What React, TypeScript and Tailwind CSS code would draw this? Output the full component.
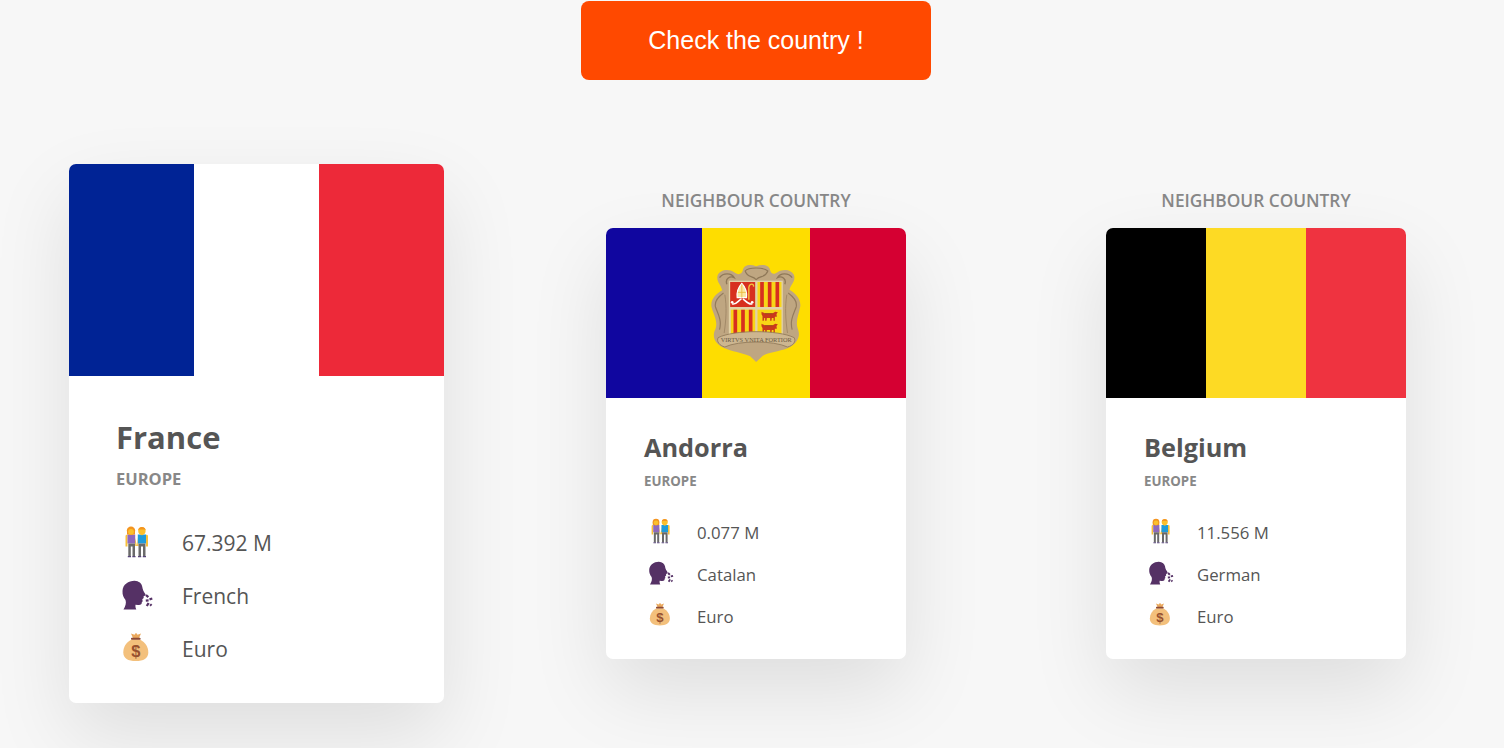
const Couple = ({ className }: { className: string }) => (
  <svg viewBox="0 0 40 40" className={className}>
    {/* arms */}
    <path d="M9.500 14a1.500 1.500 0 0 1 2-1.200v11.700H9.500zM30 12.800a1.500 1.500 0 0 1 2 1.200v10.500h-2z" fill="#f8c03a" />
    <path d="M18.800 15l2.200 9h-1.700zM22 15l-1 9h1.600z" fill="#f8c03a" />
    {/* bodies */}
    <path d="M11.500 12.500h7.700v9h-7.700z" fill="#8e68bd" />
    <path d="M21.800 12.500H30v9h-8.200z" fill="#1f9bdb" />
    {/* legs */}
    <path d="M12.300 21.500h6.700V34h-2.500V24.500h-1.700V34h-2.500z" fill="#6a6a6a" />
    <path d="M22.500 21.500h7V34H27V24.500h-2V34h-2.500z" fill="#6a6a6a" />
    <path d="M11.800 34h3.200v1.300h-3.200zM16.300 34h3.200v1.300h-3.200zM22 34h3.200v1.300H22zM26.800 34H30v1.300h-3.200z" fill="#57457a" />
    {/* heads */}
    <circle cx="15" cy="8.800" r="4.200" fill="#f4941f" />
    <path d="M11 9h8v3.500h-8z" fill="#f4941f" />
    <circle cx="15" cy="9.800" r="2.900" fill="#fbc02d" />
    <circle cx="25.900" cy="9" r="3.700" fill="#fbc02d" />
    <path d="M22.200 8.600a3.700 3.700 0 0 1 7.400 0l-1 -1h-5.400z" fill="#f4941f" />
    <rect x="24.700" y="11.500" width="2.400" height="1.600" fill="#fbc02d" />
  </svg>
);

const Speaking = ({ className }: { className: string }) => (
  <svg viewBox="0 0 40 40" className={className}>
    <path
      d="M7.500 34.500 C9.500 31 10.500 28 9.500 25 C7.500 22.500 6.300 20 6.500 16 C6.800 9.500 12.500 5.800 18.500 5.800 C23 6 25.800 8.500 26.300 12 C26.600 14.500 27.800 16.800 29.500 19.200 C30 20.200 28.500 21 27.600 21.300 L27.700 23 L26.300 24.300 L26.700 26.300 L25.800 27.300 C26 29.500 24.500 30.300 22 30 L19.500 29.800 C19.300 31.500 19.500 33 20.300 34.500 Z"
      fill="#553165"
    />
    <g stroke="#553165" strokeWidth="2.300" strokeLinecap="butt">
      <path d="M30 20l2.300 2.200" />
      <path d="M33.500 24.300l2.800-.8" />
      <path d="M29.800 25.600l2.800-.2" />
      <path d="M30.800 31l1.800-3" />
      <path d="M34.200 29.300l1.300 1.300" />
    </g>
  </svg>
);

const MoneyBag = ({ className }: { className: string }) => (
  <svg viewBox="0 0 40 40" className={className}>
    <path d="M15 5.500l3.500 1.300 1.500-2 1.500 2 3.500-1.300-2 4.700h-6z" fill="#eaa95e" />
    <path
      d="M15.500 11.500 C10 14.500 7.300 19 7.300 24.500 C7.300 30.500 12 33 19.800 33 C27.500 33 32.300 30.500 32.300 24.500 C32.300 19 29.500 14.500 24 11.500 Z"
      fill="#f3c07c"
    />
    <rect x="15" y="9.800" width="9.600" height="2" rx=".8" fill="#8c4a36" />
    <text x="19.800" y="28.500" textAnchor="middle" fontSize="16.500" fontWeight="700" fill="#97512f" fontFamily="'Liberation Sans', sans-serif">
      $
    </text>
  </svg>
);

const Bull = ({ y }: { y: number }) => (
  <g transform={`translate(0 ${y})`}>
    <path d="M184 10 l10 5 h24 l7 -5 l8 2 l-4 5 l1 8 h-6 v12 h-4 v-8 h-5 l-1 8 h-4 v-8 h-10 l-1 8 h-4 v-8 h-3 l-1 8 h-4 v-14 l-3 -5z" fill="#c93a1c" />
    <path d="M194 16h24" stroke="#8a4a1c" strokeWidth="2" />
  </g>
);

const AndorraCrest = () => (
  <svg viewBox="30 40 275 300" className="w-[92px] h-[100px] shrink-0">
    <path
      d="M128 62 C130 46 150 42 168 50 C186 42 208 46 210 62 C214 76 224 74 232 68 C248 56 276 60 282 78 C286 96 272 104 268 120 C286 130 304 150 300 172 C296 195 284 215 294 240 C302 264 288 284 262 296 C236 306 206 308 188 318 L168 337 L150 320 C125 308 95 306 70 294 C44 282 34 260 46 238 C54 215 40 195 34 172 C30 150 48 132 66 122 C62 104 48 96 52 78 C58 60 86 56 102 68 C112 76 124 76 128 62 Z"
      fill="#bfa681"
    />
    <path d="M58 84 C70 68 94 70 102 84 C90 78 74 86 80 104 M276 84 C264 68 240 70 232 84 C244 78 260 86 254 104" fill="none" stroke="#8f7858" strokeWidth="4" />
    <path d="M135 64 C145 52 190 52 203 64 C195 86 180 76 168 90 C156 76 142 86 135 64 Z" fill="none" stroke="#8f7858" strokeWidth="3.500" />
    <path d="M70 130 C56 140 42 155 46 172 C52 190 66 210 58 240 M264 130 C278 140 292 155 288 172 C282 190 268 210 276 240" fill="none" stroke="#937b5c" strokeWidth="3.500" />
    <path d="M74 135 C80 170 78 210 72 250 M260 135 C254 170 256 210 262 250" fill="none" stroke="#a38a68" strokeWidth="3" />
    <rect x="86" y="93" width="162" height="166" fill="#e2d2a8" />
    <rect x="90" y="97" width="75" height="75" fill="#d7301f" />
    <path d="M125 101 C113 114 109 128 111 144 L139 144 C141 128 137 114 125 101 Z" fill="#fbe9a8" stroke="#fff" strokeWidth="3.500" />
    <path d="M125 104v40M113 128h24" stroke="#e8b93a" strokeWidth="2.500" />
    <path d="M146 112 C150 100 162 102 160 111 M146 112v38" fill="none" stroke="#f5c63c" strokeWidth="4" />
    <path d="M96 162 C106 168 116 150 124 148 M156 162 C146 168 134 150 128 148" stroke="#fff" strokeWidth="5" fill="none" />
    <circle cx="96" cy="158" r="4" fill="#fff" />
    <circle cx="156" cy="158" r="4" fill="#fff" />
    <rect x="172" y="97" width="72" height="75" fill="#f8d616" />
    <path d="M180 97h11v75h-11zM203 97h11v75h-11zM226 97h11v75h-11z" fill="#d7301f" />
    <rect x="92" y="180" width="73" height="75" fill="#f8d616" />
    <path d="M100 180h11v75h-11zM123 180h11v75h-11zM146 180h11v75h-11z" fill="#d7301f" />
    <rect x="172" y="180" width="72" height="75" fill="#f8d616" />
    <Bull y={176} />
    <Bull y={212} />
    <path d="M54 264 C100 240 235 240 282 264 C288 275 280 288 262 292 C220 272 115 272 74 292 C58 288 48 275 54 264 Z" fill="#cdb690" stroke="#8f7858" strokeWidth="2.500" />
    <text x="168" y="276" textAnchor="middle" fontSize="19" fill="#6b5a43" fontFamily="'Liberation Serif', serif">
      VIRTVS VNITA FORTIOR
    </text>
  </svg>
);

const large = {
  card: "w-[375px] h-[539px]",
  flag: "h-[212px]",
  body: "pl-[47px] pt-[39px]",
  name: "text-[31px] leading-[44px] font-bold",
  region: "text-[16.500px] leading-[22px] mt-[9px]",
  rows: "mt-[38px] gap-[21px]",
  row: "h-[32px] text-[21px]",
  iconBox: "w-[40px] h-[40px] mb-1",
  gap: "ml-[26px]",
};

const small = {
  card: "w-[300px] h-[431px]",
  flag: "h-[170px]",
  body: "pl-[38px] pt-[32px]",
  name: "text-[25.300px] leading-[35px] font-bold",
  region: "text-[13.300px] leading-[18px] mt-[7px]",
  rows: "mt-[30px] gap-[17px]",
  row: "h-[25px] text-[16.800px]",
  iconBox: "w-[32px] h-[32px] mb-1",
  gap: "ml-[21px]",
};

type Size = typeof large;

const CountryCard = ({ name, flag, size, population, language }: { name: string; flag: React.ReactNode; size: Size; population: string; language: string }) => {
  return (
    <div className={`${size.card} bg-white rounded-[7px] overflow-hidden shadow-[0_32px_80px_rgba(0,0,0,0.1)]`}>
      <div className={`${size.flag} flex`}>{flag}</div>
      <div className={size.body}>
        <h3 className={`${size.name} text-[#555]`}>{name}</h3>
        <h4 className={`${size.region} font-bold text-[#888]`}>EUROPE</h4>
        <div className={`${size.rows} flex flex-col text-[#555]`}>
          <p className={`${size.row} flex items-center`}>
            <Couple className={`${size.iconBox} shrink-0`} />
            <span className={size.gap}>{population}</span>
          </p>
          <p className={`${size.row} flex items-center`}>
            <Speaking className={`${size.iconBox} shrink-0`} />
            <span className={size.gap}>{language}</span>
          </p>
          <p className={`${size.row} flex items-center`}>
            <MoneyBag className={`${size.iconBox} shrink-0`} />
            <span className={size.gap}>Euro</span>
          </p>
        </div>
      </div>
    </div>
  );
};

export default function App() {
  return (
    <div className="w-[1504px] h-[748px] overflow-hidden bg-[#f7f7f7] font-['Open_Sans',sans-serif]">
      <div className="flex justify-center pt-px pl-2">
        <button className="w-[350px] h-[79px] pt-px bg-[#ff4900] text-white rounded-lg text-[25px] font-['Liberation_Sans',sans-serif]">
          Check the country !
        </button>
      </div>
      <div className="flex items-start pl-[6px] mt-[84px]">
        <div className="w-[500px] shrink-0 flex justify-center pl-px">
          <CountryCard
            name="France"
            size={large}
            population="67.392 M"
            language="French"
            flag={
              <>
                <div className="w-[125px] bg-[#002395]" />
                <div className="w-[125px] bg-white" />
                <div className="w-[125px] bg-[#ed2939]" />
              </>
            }
          />
        </div>
        <div className="w-[500px] shrink-0 flex flex-col items-center pt-[25px]">
          <p className="text-[#888] text-[17.300px] leading-[23px] font-semibold mb-[16px]">NEIGHBOUR COUNTRY</p>
          <CountryCard
            name="Andorra"
            size={small}
            population="0.077 M"
            language="Catalan"
            flag={
              <>
                <div className="w-[96px] bg-[#10069f]" />
                <div className="w-[108px] bg-[#fedd00] flex items-center justify-center">
                  <AndorraCrest />
                </div>
                <div className="w-[96px] bg-[#d50032]" />
              </>
            }
          />
        </div>
        <div className="w-[500px] shrink-0 flex flex-col items-center pt-[25px]">
          <p className="text-[#888] text-[17.300px] leading-[23px] font-semibold mb-[16px]">NEIGHBOUR COUNTRY</p>
          <CountryCard
            name="Belgium"
            size={small}
            population="11.556 M"
            language="German"
            flag={
              <>
                <div className="w-[100px] bg-black" />
                <div className="w-[100px] bg-[#fdda24]" />
                <div className="w-[100px] bg-[#ef3340]" />
              </>
            }
          />
        </div>
      </div>
    </div>
  );
}
